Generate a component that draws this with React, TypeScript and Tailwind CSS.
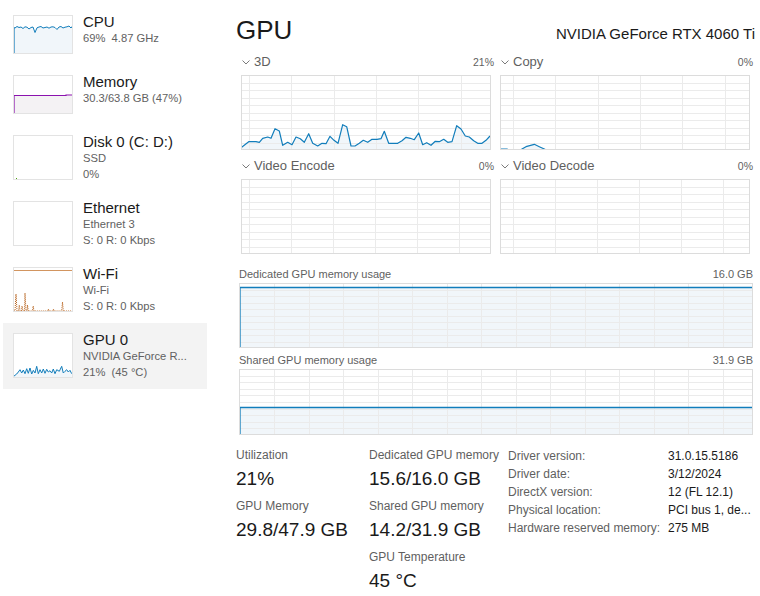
import React from 'react';

const BLUE = '#117dbb';

type Pt = number[];

const pts = (arr: Pt[]) => arr.map((p) => p.join(',')).join(' ');

const cols = (start: number, step: number, w: number) => {
  const a: number[] = [];
  for (let x = start; x < w - 1; x += step) a.push(Math.round(x));
  return a;
};

function Grid({ w, h, xs, rows }: { w: number; h: number; xs: number[]; rows: number }) {
  const lines: React.ReactNode[] = [];
  xs.forEach((x, i) => lines.push(<line key={'v' + i} x1={x + 0.5} y1={0} x2={x + 0.5} y2={h} />));
  for (let i = 1; i < rows; i++) {
    const y = Math.round((i * h) / rows) + 0.5;
    lines.push(<line key={'h' + i} x1={0} y1={y} x2={w} y2={y} />);
  }
  return (
    <g stroke="#ebebeb" strokeWidth={1} shapeRendering="crispEdges">
      {lines}
    </g>
  );
}

function Chart({ w, h, xs, data }: { w: number; h: number; xs: number[]; data?: Pt[] }) {
  return (
    <svg width={w} height={h} className="block">
      <rect x={0} y={0} width={w} height={h} fill="#fff" />
      {data && (
        <polygon
          points={pts([...data, [data[data.length - 1][0], h], [data[0][0], h]])}
          fill="#f1f6fa"
        />
      )}
      <Grid w={w} h={h} xs={xs} rows={10} />
      {data && (
        <polyline points={pts(data)} fill="none" stroke={BLUE} strokeWidth={1.2} strokeLinejoin="round" />
      )}
      <rect x={0.5} y={0.5} width={w - 1} height={h - 1} fill="none" stroke="#dcdcdc" shapeRendering="crispEdges" />
    </svg>
  );
}

function MemChart({ w, h, frac }: { w: number; h: number; frac: number }) {
  const fy = Math.round(h - frac * (h - 2)) + 0.5;
  return (
    <svg width={w} height={h} className="block">
      <rect x={0} y={0} width={w} height={h} fill="#fff" />
      <rect x={0} y={fy} width={w} height={h - fy} fill="#f1f6fa" />
      <Grid w={w} h={h} xs={cols(35, 34.5, w)} rows={10} />
      <path d={`M1 ${h} L1 ${fy} L${w} ${fy}`} fill="none" stroke={BLUE} strokeWidth={1.3} />
      <rect x={0.5} y={0.5} width={w - 1} height={h - 1} fill="none" stroke="#dcdcdc" shapeRendering="crispEdges" />
    </svg>
  );
}

// sampled by eye from the reference
const data3d: Pt[] = [
  [0, 72.7], [7.7, 66.7], [15, 66.7], [18.3, 67.3], [21.7, 63.3], [26.7, 62], [30, 63.3], [34, 53.7],
  [38.3, 56], [41.7, 70.3], [46.7, 67.3], [51, 69.7], [55, 62], [59.3, 63.7], [63.3, 67.3], [67.7, 58.7],
  [71.7, 68.3], [76.7, 71], [81, 68.3], [85, 68.7], [89, 61.3], [93, 65.3], [97, 68.3], [101.7, 49.7],
  [105.7, 51.7], [110, 71], [114, 71], [118.3, 68.3], [122.3, 65.3], [126.7, 67.3], [131, 64.3], [136, 64.3],
  [140, 63.7], [143.3, 56.3], [147.7, 68.3], [151.7, 68.3], [156.7, 68.3], [161, 65.7], [165, 62.3],
  [169.3, 63.3], [173.3, 64.7], [177.7, 58], [181.7, 69.7], [185.7, 67.7], [190, 70.3], [194.3, 66.3],
  [198.3, 66.7], [202.7, 64.3], [206.7, 67.3], [211, 66.7], [215.7, 50.7], [220, 54], [224.3, 61],
  [228.3, 62], [232.7, 65.7], [236.7, 68.3], [241, 68.3], [245, 65.3], [249, 61],
];

const dataCopy: Pt[] = [
  [1, 74], [7, 74], [8, 75], [21, 75], [22, 74], [26, 71.7], [34.3, 69.3], [39.3, 71.7], [44.3, 74], [46, 75],
];

const cpuY = [12.5, 13, 11.5, 12.5, 12, 13.5, 11.8, 12.2, 14, 12.5, 12, 17.5, 12.8, 12, 11.5, 13, 12.5, 12, 13.2, 12,
  11.8, 12.5, 14.5, 12, 11.5, 13, 12.2, 11.8, 11, 13, 10.5];

const gpuThumb: Pt[] = [
  [0.7, 43.3], [3.7, 41], [5.3, 39], [7, 36.7], [8.7, 40], [10.3, 37], [12, 40.7], [13.7, 35.7], [15.3, 40.3],
  [17, 35], [18.7, 41], [20.3, 37.3], [22, 40], [23.7, 33.3], [25.3, 40.7], [27, 36.7], [28.7, 40], [30.3, 36],
  [32, 40.3], [33.7, 36.3], [35.3, 39], [37, 37.7], [38.7, 40], [40.3, 36], [42, 40.7], [43.7, 36.7],
  [46.3, 38.3], [48.7, 33.3], [50.3, 40], [52, 38.3], [53.7, 36.7], [55.3, 39], [57, 37.3], [58.7, 40.7],
];

function Thumb({ h, children }: { h: number; children?: React.ReactNode }) {
  return (
    <svg width={60} height={h} className="block shrink-0 mt-[3px]">
      <rect x={0} y={0} width={60} height={h} fill="#fff" />
      {children}
      <rect x={0.5} y={0.5} width={59} height={h - 1} fill="none" stroke="#e3e3e3" shapeRendering="crispEdges" />
    </svg>
  );
}

const cpuPts: Pt[] = cpuY.map((y, i) => [i * 2, y]);

const thumbs: Record<string, React.ReactNode> = {
  cpu: (
    <Thumb h={39}>
      <polygon points={pts([...cpuPts, [60, 39], [0, 39]])} fill="#f1f6fa" />
      <polyline points={pts(cpuPts)} fill="none" stroke={BLUE} strokeWidth={1} />
      <line x1={1} y1={12.5} x2={1} y2={39} stroke={BLUE} strokeWidth={1.2} />
    </Thumb>
  ),
  mem: (
    <Thumb h={39}>
      <rect x={0} y={20.5} width={60} height={18.5} fill="#f4f2f4" />
      <path d="M1 39 L1 20.5 L53 20.5 L53 20 L60 20" fill="none" stroke="#8b12ae" strokeWidth={1.2} />
    </Thumb>
  ),
  disk: (
    <Thumb h={45}>
      <rect x={3} y={43} width={1} height={1} fill="#4da60c" />
    </Thumb>
  ),
  eth: <Thumb h={45} />,
  wifi: (
    <Thumb h={45}>
      <line x1={0} y1={3.5} x2={60} y2={3.5} stroke="#d29560" strokeWidth={1} />
      <polyline
        points={pts([
          [1, 44], [2, 44], [3, 27], [4, 44], [5.5, 44], [6.3, 38], [7, 44], [8.5, 44], [9, 39], [10, 44],
          [11.5, 44], [12, 26], [13, 44], [14, 44], [14.5, 38], [15.3, 44], [19.5, 44], [20.2, 39], [21, 44],
          [35, 44], [35.5, 42], [36, 44], [40, 44], [40.5, 42], [41, 44], [48.7, 44], [49.5, 35], [50.3, 44], [59, 44],
        ])}
        fill="none"
        stroke="#b8631d"
        strokeWidth={1}
        strokeDasharray="1 1"
      />
    </Thumb>
  ),
  gpu: (
    <Thumb h={45}>
      <polygon points={pts([...gpuThumb, [58.7, 45], [0.7, 45]])} fill="#f1f6fa" />
      <polyline points={pts(gpuThumb)} fill="none" stroke={BLUE} strokeWidth={1} />
    </Thumb>
  ),
};

const sideItems = [
  { id: 'cpu', title: 'CPU', lines: ['69%  4.87 GHz'] },
  { id: 'mem', title: 'Memory', lines: ['30.3/63.8 GB (47%)'] },
  { id: 'disk', title: 'Disk 0 (C: D:)', lines: ['SSD', '0%'] },
  { id: 'eth', title: 'Ethernet', lines: ['Ethernet 3', 'S: 0 R: 0 Kbps'] },
  { id: 'wifi', title: 'Wi-Fi', lines: ['Wi-Fi', 'S: 0 R: 0 Kbps'] },
  { id: 'gpu', title: 'GPU 0', lines: ['NVIDIA GeForce R...', '21%  (45 °C)'], active: true },
];

function Chevron() {
  return (
    <svg width={8} height={5} className="block">
      <path d="M0.5 0.5 L4 4 L7.5 0.5" fill="none" stroke="#7a7a7a" strokeWidth={1} />
    </svg>
  );
}

function Section({ label, pct, children }: { label: string; pct: string; children: React.ReactNode }) {
  return (
    <div className="w-[254px]">
      <div className="flex items-center justify-between h-[16px]">
        <div className="flex items-center">
          <div className="ml-[2px] w-[12px]">
            <Chevron />
          </div>
          <span className="text-[13px] leading-[16px] text-[#5f5f5f]">{label}</span>
        </div>
        <span className="text-[10.5px] leading-[16px] text-[#5f5f5f]">{pct}</span>
      </div>
      <div className="mt-[5px] ml-[1px]">{children}</div>
    </div>
  );
}

function Stat({ label, value }: { label: string; value: string }) {
  return (
    <div>
      <div className="text-[12px] leading-[15px] text-[#5f5f5f]">{label}</div>
      <div className="mt-[5px] text-[19px] leading-[22px] text-[#1a1a1a]">{value}</div>
    </div>
  );
}

const info = [
  ['Driver version:', '31.0.15.5186'],
  ['Driver date:', '3/12/2024'],
  ['DirectX version:', '12 (FL 12.1)'],
  ['Physical location:', 'PCI bus 1, de...'],
  ['Hardware reserved memory:', '275 MB'],
];

export default function App() {
  return (
    <div className="w-[760px] h-[596px] bg-white flex overflow-hidden font-['Liberation_Sans',Arial,sans-serif] text-[#1a1a1a]">
      {/* sidebar */}
      <div className="w-[236px] shrink-0 pt-[5px]">
        {sideItems.map((it) => (
          <div
            key={it.id}
            className={
              'ml-[3px] w-[204px] pl-[10px] pt-[7px] flex gap-[10px] ' +
              (it.lines.length > 1 ? 'h-[66px] ' : 'h-[60px] ') +
              (it.active ? 'bg-[#f3f3f3]' : '')
            }
          >
            {thumbs[it.id]}
            <div className="whitespace-pre">
              <div className="text-[15px] leading-[19px] text-[#1a1a1a]">{it.title}</div>
              {it.lines.map((l) => (
                <div key={l} className="text-[11.2px] leading-[15.5px] text-[#616161]">
                  {l}
                </div>
              ))}
            </div>
          </div>
        ))}
      </div>

      {/* main */}
      <div className="flex-1 pt-[14px] pr-[5px]">
        <div className="flex items-baseline justify-between">
          <span className="text-[26px] leading-[32px]">GPU</span>
          <span className="text-[15px] leading-[20px]">NVIDIA GeForce RTX 4060 Ti</span>
        </div>

        <div className="ml-[4px] mt-[8px] flex gap-[5px]">
          <Section label="3D" pct="21%">
            <Chart w={250} h={75} xs={cols(8, 42.3, 250)} data={data3d} />
          </Section>
          <Section label="Copy" pct="0%">
            <Chart w={250} h={75} xs={cols(13, 42.3, 250)} data={dataCopy} />
          </Section>
        </div>

        <div className="ml-[4px] mt-[8px] flex gap-[5px]">
          <Section label="Video Encode" pct="0%">
            <Chart w={250} h={75} xs={cols(8, 42, 250)} />
          </Section>
          <Section label="Video Decode" pct="0%">
            <Chart w={250} h={75} xs={cols(13, 42, 250)} />
          </Section>
        </div>

        <div className="ml-[3px] w-[514px] mt-[13px]">
          <div className="flex justify-between text-[11px] leading-[14px] text-[#5f5f5f]">
            <span>Dedicated GPU memory usage</span>
            <span>16.0 GB</span>
          </div>
          <div className="mt-[2px]">
            <MemChart w={514} h={65} frac={0.975} />
          </div>
          <div className="mt-[5px] flex justify-between text-[11px] leading-[14px] text-[#5f5f5f]">
            <span>Shared GPU memory usage</span>
            <span>31.9 GB</span>
          </div>
          <div className="mt-[2px]">
            <MemChart w={514} h={66} frac={0.445} />
          </div>
        </div>

        <div className="mt-[13px] flex">
          <div className="w-[133px] flex flex-col gap-[9px]">
            <Stat label="Utilization" value="21%" />
            <Stat label="GPU Memory" value="29.8/47.9 GB" />
          </div>
          <div className="w-[139px] flex flex-col gap-[9px]">
            <Stat label="Dedicated GPU memory" value="15.6/16.0 GB" />
            <Stat label="Shared GPU memory" value="14.2/31.9 GB" />
            <Stat label="GPU Temperature" value="45 °C" />
          </div>
          <div className="-mt-[1px]">
            {info.map(([k, v]) => (
              <div key={k} className="flex text-[12px] leading-[18px]">
                <span className="w-[160px] text-[#5f5f5f]">{k}</span>
                <span className="text-[#1a1a1a]">{v}</span>
              </div>
            ))}
          </div>
        </div>
      </div>
    </div>
  );
}
